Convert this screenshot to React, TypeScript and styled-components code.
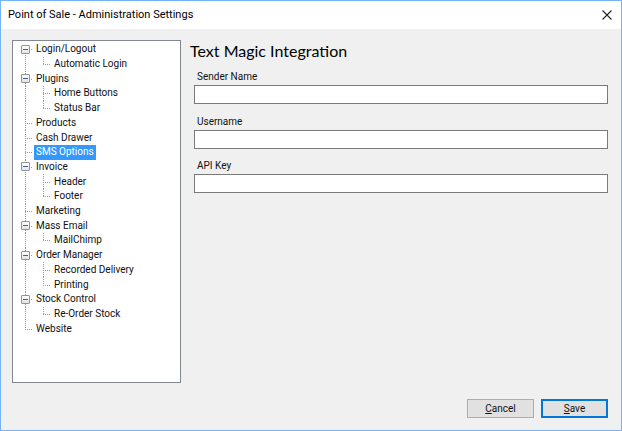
import React, { useState } from "react";
import styled, { createGlobalStyle, css } from "styled-components";

const GlobalStyle = createGlobalStyle`
  *, *::before, *::after { box-sizing: border-box; }
  body { margin: 0; }
  button, input { font: inherit; color: inherit; }
`;

const Dialog = styled.main`
  display: flex;
  flex-direction: column;
  min-height: 100vh;
  border: 1px solid #74b4f4;
  background: #f0f0f0;
  color: #111;
  font-family: Roboto, "Liberation Sans", sans-serif;
  font-size: 10px;
  line-height: 14px;
`;

const TitleBar = styled.header`
  display: flex;
  align-items: center;
  justify-content: space-between;
  height: 28px;
  padding-left: 7px;
  background: #fff;
`;

const WindowTitle = styled.h1`
  margin: 0;
  font: 400 11px/16px Roboto, "Noto Sans", sans-serif;
  color: #000;
`;

const CloseButton = styled.button`
  display: grid;
  place-items: center;
  width: 28px;
  height: 28px;
  padding: 0;
  border: 0;
  background: transparent;
`;

const Content = styled.div`
  display: flex;
  flex: 1;
  gap: 9px;
  padding: 11px 13px 12px 11px;
`;

const TreePanel = styled.nav`
  flex: 0 0 169px;
  margin-bottom: 35px;
  border: 1px solid #828790;
  background: #fff;
`;

const Tree = styled.ul`
  display: grid;
  grid-auto-rows: 1fr;
  min-height: 295px;
  margin: 0;
  padding: 1px 0 0 8px;
  list-style: none;
`;

const TreeRow = styled.li`
  display: flex;
  align-items: stretch;
  min-height: 0;
`;

const dotsDown = "repeating-linear-gradient(to bottom, #999 0 1px, transparent 1px 2px)";
const dotsAcross = "repeating-linear-gradient(to right, #999 0 1px, transparent 1px 2px)";

type Line = "start" | "through" | "end";

const Connector = styled.span<{ $line: Line; $branch: boolean; $child?: boolean }>`
  position: relative;
  display: flex;
  align-items: center;
  flex: 0 0 ${(p) => (p.$child ? 18 : 13)}px;

  &::before {
    content: "";
    position: absolute;
    left: 4px;
    top: ${(p) => (p.$line === "start" ? "50%" : "0")};
    bottom: ${(p) => (p.$line === "end" ? "50%" : "0")};
    width: 1px;
    background: ${dotsDown};
  }

  ${(p) =>
    p.$branch &&
    css`
      &::after {
        content: "";
        position: absolute;
        left: 4px;
        top: 50%;
        width: 8px;
        height: 1px;
        background: ${dotsAcross};
      }
    `}
`;

const Expander = styled.button`
  position: relative;
  z-index: 1;
  display: grid;
  place-items: center;
  width: 9px;
  height: 9px;
  padding: 0;
  border: 1px solid #959595;
  border-radius: 1px;
  background: linear-gradient(#fff, #e4e4e4);
`;

const TreeLabel = styled.span<{ $selected: boolean }>`
  display: flex;
  align-items: center;
  padding: 0 2px;
  white-space: nowrap;
  color: ${(p) => (p.$selected ? "#fff" : "#111")};
  background: ${(p) => (p.$selected ? "#3399ff" : "transparent")};
`;

const Settings = styled.form`
  display: flex;
  flex: 1;
  flex-direction: column;
  min-width: 0;
`;

const Heading = styled.h2`
  margin: 0;
  font: 400 16px/22px Lato, sans-serif;
  color: #000;
`;

const Fields = styled.div`
  display: flex;
  flex-direction: column;
  justify-content: space-between;
  min-height: 125px;
  margin-top: 6px;
  padding-left: 4px;
`;

const Field = styled.div`
  display: flex;
  flex-direction: column;
`;

const FieldLabel = styled.label`
  height: 17px;
  padding-left: 3px;
  line-height: 18px;
`;

const TextBox = styled.input`
  width: 100%;
  height: 19px;
  padding: 0 3px;
  border: 1px solid #7a7a7a;
  border-radius: 0;
  background: #fff;
`;

const Actions = styled.footer`
  display: flex;
  justify-content: flex-end;
  gap: 7px;
  margin-top: auto;
`;

const ActionButton = styled.button<{ $primary?: boolean }>`
  width: 67px;
  height: 19px;
  padding: 0;
  border: ${(p) => (p.$primary ? "2px solid #0078d7" : "1px solid #adadad")};
  background: #e1e1e1;
  line-height: 14px;
`;

type Group = { name: string; children?: string[] };

const groups: Group[] = [
  { name: "Login/Logout", children: ["Automatic Login"] },
  { name: "Plugins", children: ["Home Buttons", "Status Bar"] },
  { name: "Products" },
  { name: "Cash Drawer" },
  { name: "SMS Options" },
  { name: "Invoice", children: ["Header", "Footer"] },
  { name: "Marketing" },
  { name: "Mass Email", children: ["MailChimp"] },
  { name: "Order Manager", children: ["Recorded Delivery", "Printing"] },
  { name: "Stock Control", children: ["Re-Order Stock"] },
  { name: "Website" },
];

const fields = [
  { id: "sender", label: "Sender Name" },
  { id: "username", label: "Username" },
  { id: "api-key", label: "API Key" },
];

export default function App() {
  const [selected, setSelected] = useState("SMS Options");
  const pick = (name: string) => ({
    $selected: selected === name,
    onClick: () => setSelected(name),
  });

  return (
    <Dialog>
      <GlobalStyle />
      <TitleBar>
        <WindowTitle>Point of Sale - Administration Settings</WindowTitle>
        <CloseButton type="button" aria-label="Close">
          <svg width="10" height="10" viewBox="0 0 10 10" stroke="#222" strokeWidth="1.1">
            <path d="M.5.5l9 9M9.5.5l-9 9" />
          </svg>
        </CloseButton>
      </TitleBar>
      <Content>
        <TreePanel aria-label="Settings sections">
          <Tree role="tree">
            {groups.map((group, index) => {
              const line: Line =
                index === 0 ? "start" : index === groups.length - 1 ? "end" : "through";
              const children = group.children ?? [];
              return (
                <React.Fragment key={group.name}>
                  <TreeRow role="treeitem" aria-level={1} aria-selected={selected === group.name}>
                    <Connector $line={line} $branch>
                      {children.length > 0 && (
                        <Expander type="button" aria-label={`Collapse ${group.name}`}>
                          <svg width="5" height="1" viewBox="0 0 5 1">
                            <path d="M0 .5h5" stroke="#4060a0" />
                          </svg>
                        </Expander>
                      )}
                    </Connector>
                    <TreeLabel {...pick(group.name)}>{group.name}</TreeLabel>
                  </TreeRow>
                  {children.map((child, i) => (
                    <TreeRow
                      key={child}
                      role="treeitem"
                      aria-level={2}
                      aria-selected={selected === child}
                    >
                      <Connector $line="through" $branch={false} $child />
                      <Connector $line={i === children.length - 1 ? "end" : "through"} $branch />
                      <TreeLabel {...pick(child)}>{child}</TreeLabel>
                    </TreeRow>
                  ))}
                </React.Fragment>
              );
            })}
          </Tree>
        </TreePanel>
        <Settings onSubmit={(event) => event.preventDefault()}>
          <Heading>Text Magic Integration</Heading>
          <Fields>
            {fields.map((field) => (
              <Field key={field.id}>
                <FieldLabel htmlFor={field.id}>{field.label}</FieldLabel>
                <TextBox id={field.id} type="text" />
              </Field>
            ))}
          </Fields>
          <Actions>
            <ActionButton type="button">
              <u>C</u>ancel
            </ActionButton>
            <ActionButton type="submit" $primary>
              <u>S</u>ave
            </ActionButton>
          </Actions>
        </Settings>
      </Content>
    </Dialog>
  );
}
